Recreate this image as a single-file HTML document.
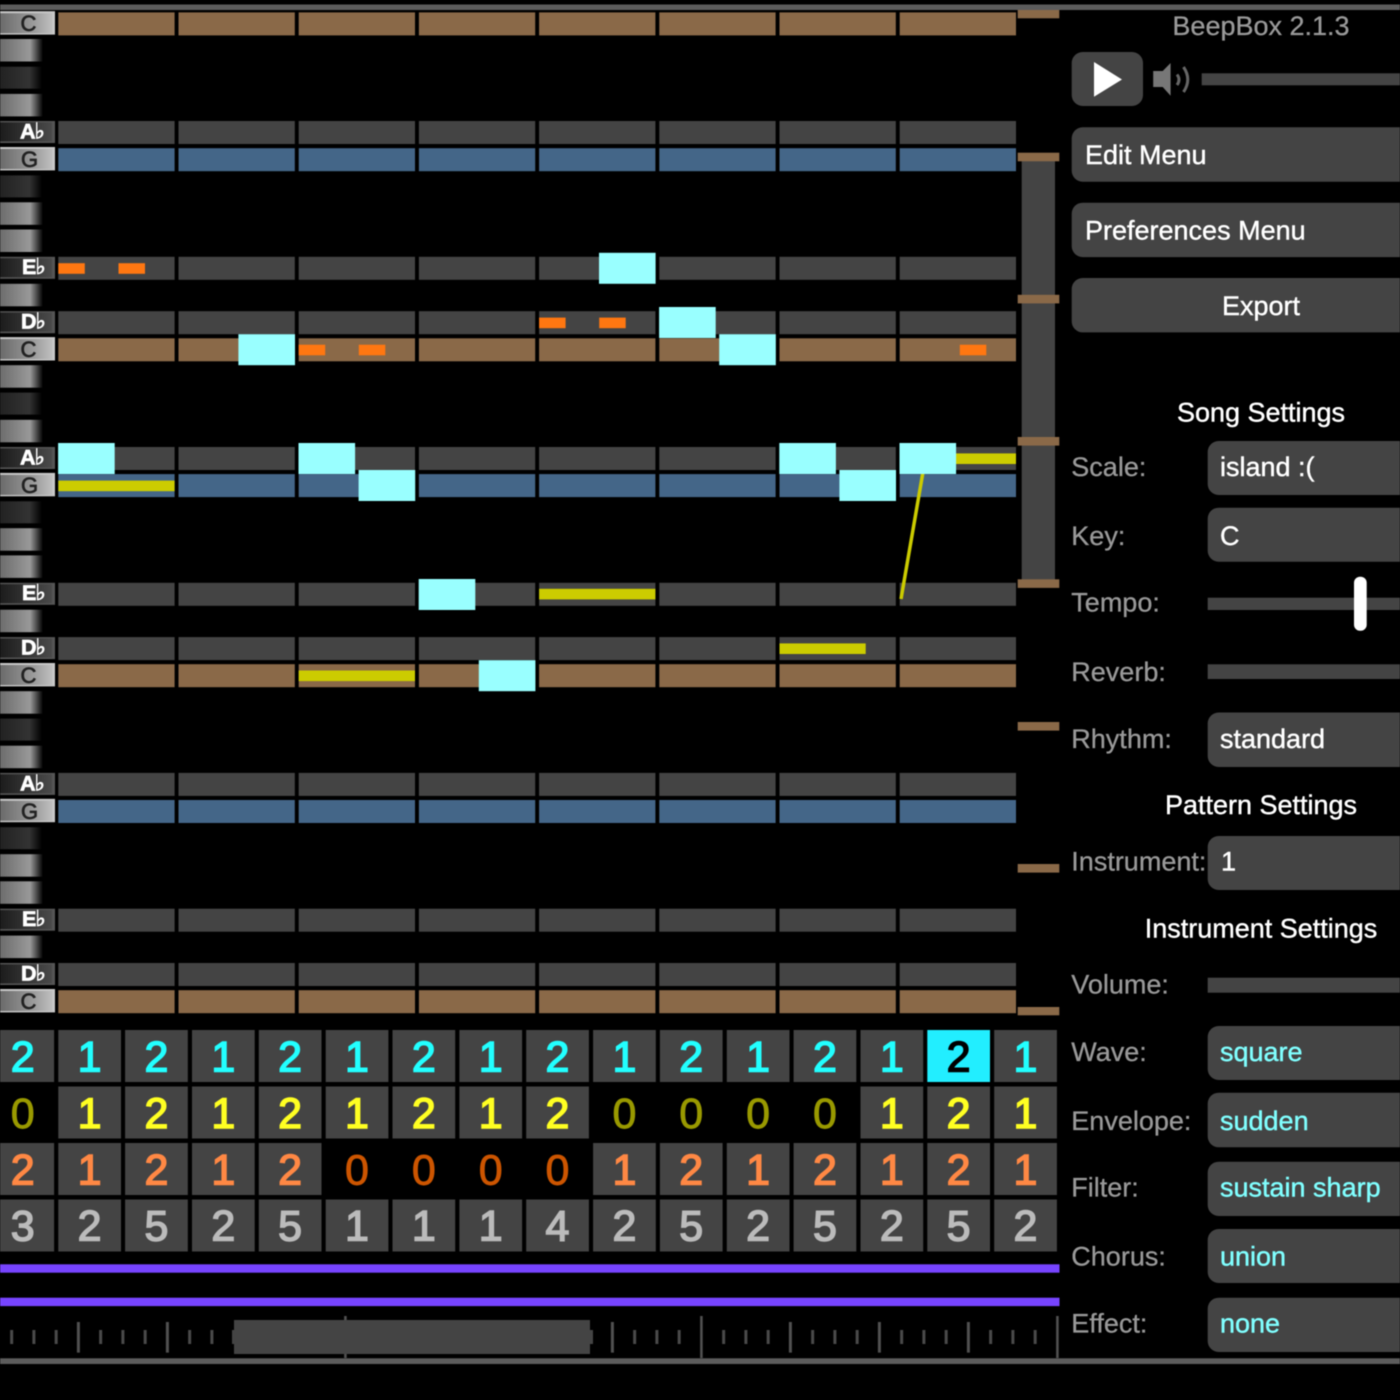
<!DOCTYPE html>
<html><head><meta charset="utf-8"><title>BeepBox 2.1.3</title>
<style>
html,body{margin:0;padding:0;background:#000;width:1400px;height:1400px;overflow:hidden}
svg{display:block;position:absolute;left:0;top:0;filter:blur(.4px)}
text{font-family:"Liberation Sans",Arial,sans-serif;font-size:27px}
.l{fill:#999;stroke:#999;stroke-width:.3px}.w{fill:#fff;stroke:#fff;stroke-width:.4px}.c{text-anchor:middle}.v{fill:#80ffff;stroke:#80ffff;stroke-width:.4px}
.d{font-size:43px;text-anchor:middle;stroke-width:1.5px}
.z{stroke-width:.9px}
.kw{font-size:22px;fill:#222;stroke:#222;stroke-width:.7px;text-anchor:middle}
.kb{font-size:21.5px;font-weight:bold;fill:#fff;stroke:#fff;stroke-width:.7px}
.kb tspan{font-family:"DejaVu Sans","Liberation Sans",sans-serif;font-size:22px}
</style></head><body>
<svg width="1400" height="1400" viewBox="0 0 1400 1400" xmlns="http://www.w3.org/2000/svg">
<defs>
<linearGradient id="gw" x1="0" x2="1" y1="0" y2="0"><stop offset="0" stop-color="#6a6a6a"/><stop offset=".7" stop-color="#a0a0a0"/><stop offset="1" stop-color="#c0c0c0"/></linearGradient>
<linearGradient id="gd" x1="0" x2="1" y1="0" y2="0"><stop offset="0" stop-color="#1c1c1c"/><stop offset=".5" stop-color="#333"/><stop offset="1" stop-color="#4a4a4a"/></linearGradient>
<linearGradient id="ug" x1="0" x2="1" y1="0" y2="0"><stop offset="0" stop-color="#6c6c6c"/><stop offset=".7" stop-color="#999"/><stop offset="1" stop-color="#000"/></linearGradient>
<linearGradient id="ud" x1="0" x2="1" y1="0" y2="0"><stop offset="0" stop-color="#222"/><stop offset=".7" stop-color="#333"/><stop offset="1" stop-color="#000"/></linearGradient>
<g id="b">
<rect x="58.3" width="116.3" height="23"/><rect x="178.5" width="116.3" height="23"/><rect x="298.7" width="116.3" height="23"/><rect x="418.9" width="116.3" height="23"/><rect x="539.1" width="116.3" height="23"/><rect x="659.3" width="116.3" height="23"/><rect x="779.5" width="116.3" height="23"/><rect x="899.7" width="116.3" height="23"/>
</g>
<g id="ku"><rect x="0" y="0" width="43" height="22.5" fill="url(#ug)"/></g>
<g id="kd"><rect x="0" y="0" width="42" height="22" fill="url(#ud)"/></g>
<g id="kw"><rect x="0" y="-1.2" width="55" height="23.4" fill="#c8c8c8"/><rect x="0" y="0.8" width="52.5" height="20" fill="url(#gw)"/></g>
<g id="kk"><rect x="0" y="0" width="55" height="22" fill="#555"/><rect x="0" y="1.4" width="52" height="19" fill="url(#gd)"/></g>
<g id="n"><rect width="56.6" height="31" fill="#99ffff"/></g>
</defs>

<!-- frame lines -->
<rect x="0" y="4.5" width="1400" height="5.5" fill="#5c5c5c"/>
<rect x="0" y="1358.3" width="1400" height="5.7" fill="#5c5c5c"/>

<!-- piano keys -->
<use href="#kw" y="12.4"/><use href="#ku" y="39"/><use href="#kd" y="66.7"/><use href="#ku" y="93.9"/><use href="#kk" y="121"/><use href="#kw" y="148.2"/><use href="#kd" y="175.4"/><use href="#ku" y="202.3"/><use href="#ku" y="229.5"/><use href="#kk" y="256.8"/><use href="#ku" y="283.8"/><use href="#kk" y="311.2"/>
<use href="#kw" y="338.3"/><use href="#ku" y="365.2"/><use href="#kd" y="392.6"/><use href="#ku" y="419.8"/><use href="#kk" y="447"/><use href="#kw" y="474.1"/><use href="#kd" y="501.3"/><use href="#ku" y="528.2"/><use href="#ku" y="555.4"/><use href="#kk" y="582.8"/><use href="#ku" y="609.7"/><use href="#kk" y="637.1"/>
<use href="#kw" y="664.2"/><use href="#ku" y="691.2"/><use href="#kd" y="718.6"/><use href="#ku" y="745.7"/><use href="#kk" y="772.9"/><use href="#kw" y="800"/><use href="#kd" y="827.2"/><use href="#ku" y="854.2"/><use href="#ku" y="881.3"/><use href="#kk" y="908.7"/><use href="#ku" y="935.6"/><use href="#kk" y="963"/>
<use href="#kw" y="990.2"/>

<text class="kw" x="28.5" y="31.2">C</text>
<text class="kb" x="20" y="138.4">A<tspan dx="-1">♭</tspan></text>
<text class="kw" x="29.5" y="167">G</text>
<text class="kb" x="22" y="274.2">E<tspan dx="-1">♭</tspan></text>
<text class="kb" x="21" y="328.6">D<tspan dx="-1">♭</tspan></text>
<text class="kw" x="28.5" y="357.1">C</text>
<text class="kb" x="20" y="464.4">A<tspan dx="-1">♭</tspan></text>
<text class="kw" x="29.5" y="492.9">G</text>
<text class="kb" x="22" y="600.2">E<tspan dx="-1">♭</tspan></text>
<text class="kb" x="21" y="654.5">D<tspan dx="-1">♭</tspan></text>
<text class="kw" x="28.5" y="683">C</text>
<text class="kb" x="20" y="790.3">A<tspan dx="-1">♭</tspan></text>
<text class="kw" x="29.5" y="818.8">G</text>
<text class="kb" x="22" y="926.1">E<tspan dx="-1">♭</tspan></text>
<text class="kb" x="21" y="980.4">D<tspan dx="-1">♭</tspan></text>
<text class="kw" x="28.5" y="1009">C</text>

<!-- pitch rows -->
<use href="#b" y="12.4" fill="#8a6948"/><use href="#b" y="121" fill="#444"/><use href="#b" y="148.2" fill="#446688"/><use href="#b" y="256.8" fill="#444"/><use href="#b" y="311.2" fill="#444"/>
<use href="#b" y="338.3" fill="#8a6948"/><use href="#b" y="447" fill="#444"/><use href="#b" y="474.1" fill="#446688"/><use href="#b" y="582.8" fill="#444"/><use href="#b" y="637.1" fill="#444"/>
<use href="#b" y="664.2" fill="#8a6948"/><use href="#b" y="772.9" fill="#444"/><use href="#b" y="800" fill="#446688"/><use href="#b" y="908.7" fill="#444"/><use href="#b" y="963" fill="#444"/>
<use href="#b" y="990.2" fill="#8a6948"/>

<!-- yellow notes -->
<g fill="#cccc00">
<rect x="58.3" y="480.6" width="116.3" height="10.6"/>
<rect x="539.1" y="588.8" width="116.3" height="10.6"/>
<rect x="899.7" y="453.4" width="116.3" height="10.6"/>
<rect x="779.5" y="643.4" width="86.2" height="10.6"/>
<rect x="298.7" y="670.5" width="116.3" height="10.6"/>
</g>
<path d="M923,472 L901,599" stroke="#cccc00" stroke-width="3.5" fill="none"/>

<!-- orange notes -->
<g fill="#ff7711">
<rect x="58.3" y="263.2" width="26.5" height="10.6"/><rect x="118.5" y="263.2" width="26.5" height="10.6"/>
<rect x="539.1" y="317.6" width="26.5" height="10.6"/><rect x="599.2" y="317.6" width="26.5" height="10.6"/>
<rect x="298.7" y="344.7" width="26.5" height="10.6"/><rect x="358.8" y="344.7" width="26.5" height="10.6"/><rect x="959.8" y="344.7" width="26.5" height="10.6"/>
</g>

<!-- cyan notes -->
<use href="#n" x="599" y="252.8"/><use href="#n" x="659.1" y="307"/><use href="#n" x="238.4" y="334.2"/><use href="#n" x="719.2" y="334.2"/>
<use href="#n" x="58.1" y="443"/><use href="#n" x="298.5" y="443"/><use href="#n" x="779.3" y="443"/><use href="#n" x="899.5" y="443"/>
<use href="#n" x="358.6" y="470"/><use href="#n" x="839.4" y="470"/><use href="#n" x="418.7" y="579"/><use href="#n" x="478.8" y="660.2"/>

<!-- octave scrollbar -->
<rect x="1021.7" y="160" width="33.3" height="422" fill="#444"/>
<g fill="#8a6948">
<rect x="1017.7" y="10" width="41.6" height="8.3"/><rect x="1017.7" y="152.7" width="41.6" height="8.6"/><rect x="1017.7" y="294.8" width="41.6" height="8.6"/><rect x="1017.7" y="437" width="41.6" height="8.6"/><rect x="1017.7" y="579.3" width="41.6" height="8.6"/><rect x="1017.7" y="722" width="41.6" height="8.6"/><rect x="1017.7" y="864" width="41.6" height="8.6"/><rect x="1017.7" y="1007" width="41.6" height="8.3"/>
</g>

<!-- pattern grid cells -->
<g fill="#444">
<rect x="-8.6" y="1030" width="62.7" height="52"/><rect x="58.3" y="1030" width="62.7" height="52"/><rect x="125.1" y="1030" width="62.7" height="52"/><rect x="192" y="1030" width="62.7" height="52"/><rect x="258.8" y="1030" width="62.7" height="52"/><rect x="325.7" y="1030" width="62.7" height="52"/><rect x="392.5" y="1030" width="62.7" height="52"/><rect x="459.4" y="1030" width="62.7" height="52"/><rect x="526.2" y="1030" width="62.7" height="52"/><rect x="593.1" y="1030" width="62.7" height="52"/><rect x="659.9" y="1030" width="62.7" height="52"/><rect x="726.8" y="1030" width="62.7" height="52"/><rect x="793.6" y="1030" width="62.7" height="52"/><rect x="860.5" y="1030" width="62.7" height="52"/><rect x="927.3" y="1030" width="62.7" height="52" fill="#22eeff"/><rect x="994.2" y="1030" width="62.7" height="52"/>

<rect x="58.3" y="1086.5" width="62.7" height="52"/><rect x="125.1" y="1086.5" width="62.7" height="52"/><rect x="192" y="1086.5" width="62.7" height="52"/><rect x="258.8" y="1086.5" width="62.7" height="52"/><rect x="325.7" y="1086.5" width="62.7" height="52"/><rect x="392.5" y="1086.5" width="62.7" height="52"/><rect x="459.4" y="1086.5" width="62.7" height="52"/><rect x="526.2" y="1086.5" width="62.7" height="52"/><rect x="860.5" y="1086.5" width="62.7" height="52"/><rect x="927.3" y="1086.5" width="62.7" height="52"/><rect x="994.2" y="1086.5" width="62.7" height="52"/>

<rect x="-8.6" y="1143" width="62.7" height="52"/><rect x="58.3" y="1143" width="62.7" height="52"/><rect x="125.1" y="1143" width="62.7" height="52"/><rect x="192" y="1143" width="62.7" height="52"/><rect x="258.8" y="1143" width="62.7" height="52"/><rect x="593.1" y="1143" width="62.7" height="52"/><rect x="659.9" y="1143" width="62.7" height="52"/><rect x="726.8" y="1143" width="62.7" height="52"/><rect x="793.6" y="1143" width="62.7" height="52"/><rect x="860.5" y="1143" width="62.7" height="52"/><rect x="927.3" y="1143" width="62.7" height="52"/><rect x="994.2" y="1143" width="62.7" height="52"/>

<rect x="-8.6" y="1199.5" width="62.7" height="52"/><rect x="58.3" y="1199.5" width="62.7" height="52"/><rect x="125.1" y="1199.5" width="62.7" height="52"/><rect x="192" y="1199.5" width="62.7" height="52"/><rect x="258.8" y="1199.5" width="62.7" height="52"/><rect x="325.7" y="1199.5" width="62.7" height="52"/><rect x="392.5" y="1199.5" width="62.7" height="52"/><rect x="459.4" y="1199.5" width="62.7" height="52"/><rect x="526.2" y="1199.5" width="62.7" height="52"/><rect x="593.1" y="1199.5" width="62.7" height="52"/><rect x="659.9" y="1199.5" width="62.7" height="52"/><rect x="726.8" y="1199.5" width="62.7" height="52"/><rect x="793.6" y="1199.5" width="62.7" height="52"/><rect x="860.5" y="1199.5" width="62.7" height="52"/><rect x="927.3" y="1199.5" width="62.7" height="52"/><rect x="994.2" y="1199.5" width="62.7" height="52"/>
</g>

<!-- pattern digits -->
<g fill="#22ffff" stroke="#22ffff">
<text class="d" x="22.7" y="1071.7">2</text><text class="d" x="89.6" y="1071.7">1</text><text class="d" x="156.4" y="1071.7">2</text><text class="d" x="223.3" y="1071.7">1</text><text class="d" x="290.1" y="1071.7">2</text><text class="d" x="357" y="1071.7">1</text><text class="d" x="423.8" y="1071.7">2</text><text class="d" x="490.7" y="1071.7">1</text><text class="d" x="557.5" y="1071.7">2</text><text class="d" x="624.4" y="1071.7">1</text><text class="d" x="691.2" y="1071.7">2</text><text class="d" x="758.1" y="1071.7">1</text><text class="d" x="824.9" y="1071.7">2</text><text class="d" x="891.8" y="1071.7">1</text><text class="d" x="958.6" y="1071.7" fill="#000" stroke="#000">2</text><text class="d" x="1025.5" y="1071.7">1</text>
</g>
<g fill="#ffff22" stroke="#ffff22">
<text class="d z" x="22.7" y="1128.2" fill="#999900" stroke="#999900">0</text><text class="d" x="89.6" y="1128.2">1</text><text class="d" x="156.4" y="1128.2">2</text><text class="d" x="223.3" y="1128.2">1</text><text class="d" x="290.1" y="1128.2">2</text><text class="d" x="357" y="1128.2">1</text><text class="d" x="423.8" y="1128.2">2</text><text class="d" x="490.7" y="1128.2">1</text><text class="d" x="557.5" y="1128.2">2</text><text class="d z" x="624.4" y="1128.2" fill="#999900" stroke="#999900">0</text><text class="d z" x="691.2" y="1128.2" fill="#999900" stroke="#999900">0</text><text class="d z" x="758.1" y="1128.2" fill="#999900" stroke="#999900">0</text><text class="d z" x="824.9" y="1128.2" fill="#999900" stroke="#999900">0</text><text class="d" x="891.8" y="1128.2">1</text><text class="d" x="958.6" y="1128.2">2</text><text class="d" x="1025.5" y="1128.2">1</text>
</g>
<g fill="#ff8844" stroke="#ff8844">
<text class="d" x="22.7" y="1184.7">2</text><text class="d" x="89.6" y="1184.7">1</text><text class="d" x="156.4" y="1184.7">2</text><text class="d" x="223.3" y="1184.7">1</text><text class="d" x="290.1" y="1184.7">2</text><text class="d z" x="357" y="1184.7" fill="#cc5500" stroke="#cc5500">0</text><text class="d z" x="423.8" y="1184.7" fill="#cc5500" stroke="#cc5500">0</text><text class="d z" x="490.7" y="1184.7" fill="#cc5500" stroke="#cc5500">0</text><text class="d z" x="557.5" y="1184.7" fill="#cc5500" stroke="#cc5500">0</text><text class="d" x="624.4" y="1184.7">1</text><text class="d" x="691.2" y="1184.7">2</text><text class="d" x="758.1" y="1184.7">1</text><text class="d" x="824.9" y="1184.7">2</text><text class="d" x="891.8" y="1184.7">1</text><text class="d" x="958.6" y="1184.7">2</text><text class="d" x="1025.5" y="1184.7">1</text>
</g>
<g fill="#bbbbbb" stroke="#bbbbbb">
<text class="d" x="22.7" y="1240.7">3</text><text class="d" x="89.6" y="1240.7">2</text><text class="d" x="156.4" y="1240.7">5</text><text class="d" x="223.3" y="1240.7">2</text><text class="d" x="290.1" y="1240.7">5</text><text class="d" x="357" y="1240.7">1</text><text class="d" x="423.8" y="1240.7">1</text><text class="d" x="490.7" y="1240.7">1</text><text class="d" x="557.5" y="1240.7">4</text><text class="d" x="624.4" y="1240.7">2</text><text class="d" x="691.2" y="1240.7">5</text><text class="d" x="758.1" y="1240.7">2</text><text class="d" x="824.9" y="1240.7">5</text><text class="d" x="891.8" y="1240.7">2</text><text class="d" x="958.6" y="1240.7">5</text><text class="d" x="1025.5" y="1240.7">2</text>
</g>

<!-- purple bars -->
<rect x="0" y="1264.3" width="1059.5" height="8.4" fill="#7744ff"/>
<rect x="0" y="1297.7" width="1059.5" height="8.4" fill="#7744ff"/>

<!-- timeline -->
<path transform="translate(-.4 0)" stroke="#4a4a4a" stroke-width="3" fill="none" d="M12.05,1330V1344M34.3,1330V1344M56.55,1330V1344M101.05,1330V1344M123.3,1330V1344M145.55,1330V1344M190.05,1330V1344M212.3,1330V1344M635.05,1330V1344M657.3,1330V1344M679.55,1330V1344M724.05,1330V1344M746.3,1330V1344M768.55,1330V1344M813.05,1330V1344M835.3,1330V1344M857.55,1330V1344M902.05,1330V1344M924.3,1330V1344M946.55,1330V1344M991.05,1330V1344M1013.3,1330V1344M1035.55,1330V1344"/>
<path transform="translate(-.4 0)" stroke="#505050" stroke-width="3" fill="none" d="M78.8,1322V1352.6M167.8,1322V1352.6M612.8,1322V1352.6M790.8,1322V1352.6M879.8,1322V1352.6M968.8,1322V1352.6"/>
<rect x="234" y="1320" width="356" height="34" fill="#444"/>
<rect x="232" y="1330" width="361" height="14" fill="#444"/>
<path transform="translate(-.4 0)" stroke="#505050" stroke-width="2.6" fill="none" d="M345.8,1316V1320M345.8,1354V1358M701.8,1316V1358M1057.8,1316V1358"/>

<!-- right panel -->
<text class="l c" x="1261" y="35">BeepBox 2.1.3</text>
<rect x="1071.7" y="52" width="71.3" height="54" rx="11" fill="#444"/>
<polygon points="1094,62 1122,79.5 1094,96.7" fill="#fff"/>
<polygon points="1153.2,71 1162.7,71 1170.6,63 1170.6,95.8 1162.7,87 1153.2,87" fill="#777"/>
<path d="M1177,74.5 Q1181,79.5 1177,85" stroke="#666" stroke-width="3" fill="none"/>
<path d="M1183.5,67 Q1192,79.5 1183.5,92" stroke="#666" stroke-width="3" fill="none"/>
<rect x="1201.7" y="73.3" width="210" height="12" fill="#444"/>

<rect x="1071.7" y="127.3" width="360" height="54.4" rx="11" fill="#444"/>
<rect x="1071.7" y="202.7" width="360" height="54.4" rx="11" fill="#444"/>
<rect x="1071.7" y="278" width="360" height="54.4" rx="11" fill="#444"/>
<text class="w" x="1085" y="164">Edit Menu</text>
<text class="w" x="1085" y="239.3">Preferences Menu</text>
<text class="w c" x="1261" y="315">Export</text>

<text class="w c" x="1261" y="421.7">Song Settings</text>
<text class="l" x="1071.3" y="476">Scale:</text>
<rect x="1207.7" y="441" width="260" height="54" rx="11" fill="#444"/>
<text class="w" x="1220" y="476">island :(</text>
<text class="l" x="1071.3" y="545">Key:</text>
<rect x="1207.7" y="507.7" width="260" height="54" rx="11" fill="#444"/>
<text class="w" x="1220" y="545">C</text>
<text class="l" x="1071.3" y="611.7">Tempo:</text>
<rect x="1207.7" y="597.7" width="260" height="12.3" fill="#444"/>
<rect x="1354" y="576.7" width="12.7" height="54" rx="6" fill="#fff"/>
<text class="l" x="1071.3" y="681">Reverb:</text>
<rect x="1207.7" y="664.3" width="260" height="14.7" fill="#444"/>
<text class="l" x="1071.3" y="748">Rhythm:</text>
<rect x="1207.7" y="712.5" width="260" height="54.5" rx="11" fill="#444"/>
<text class="w" x="1220" y="748">standard</text>

<text class="w c" x="1261" y="814">Pattern Settings</text>
<text class="l" x="1071.3" y="870.7">Instrument:</text>
<rect x="1207.7" y="836" width="260" height="54" rx="11" fill="#444"/>
<text class="w" x="1221" y="870.7">1</text>

<text class="w c" x="1261" y="937.3">Instrument Settings</text>
<text class="l" x="1071.3" y="993.3">Volume:</text>
<rect x="1207.7" y="977.7" width="260" height="15" fill="#444"/>
<text class="l" x="1071.3" y="1061">Wave:</text>
<rect x="1207.7" y="1026" width="260" height="54" rx="11" fill="#444"/>
<text class="v" x="1220" y="1061">square</text>
<text class="l" x="1071.3" y="1130">Envelope:</text>
<rect x="1207.7" y="1092.7" width="260" height="54.6" rx="11" fill="#444"/>
<text class="v" x="1220" y="1130">sudden</text>
<text class="l" x="1071.3" y="1196.7">Filter:</text>
<rect x="1207.7" y="1161.7" width="260" height="54.3" rx="11" fill="#444"/>
<text class="v" x="1220" y="1196.7">sustain sharp</text>
<text class="l" x="1071.3" y="1265.7">Chorus:</text>
<rect x="1207.7" y="1229" width="260" height="54" rx="11" fill="#444"/>
<text class="v" x="1220" y="1265.7">union</text>
<text class="l" x="1071.3" y="1332.7">Effect:</text>
<rect x="1207.7" y="1297.7" width="260" height="54.3" rx="11" fill="#444"/>
<text class="v" x="1220" y="1332.7">none</text>
</svg>
</body></html>
